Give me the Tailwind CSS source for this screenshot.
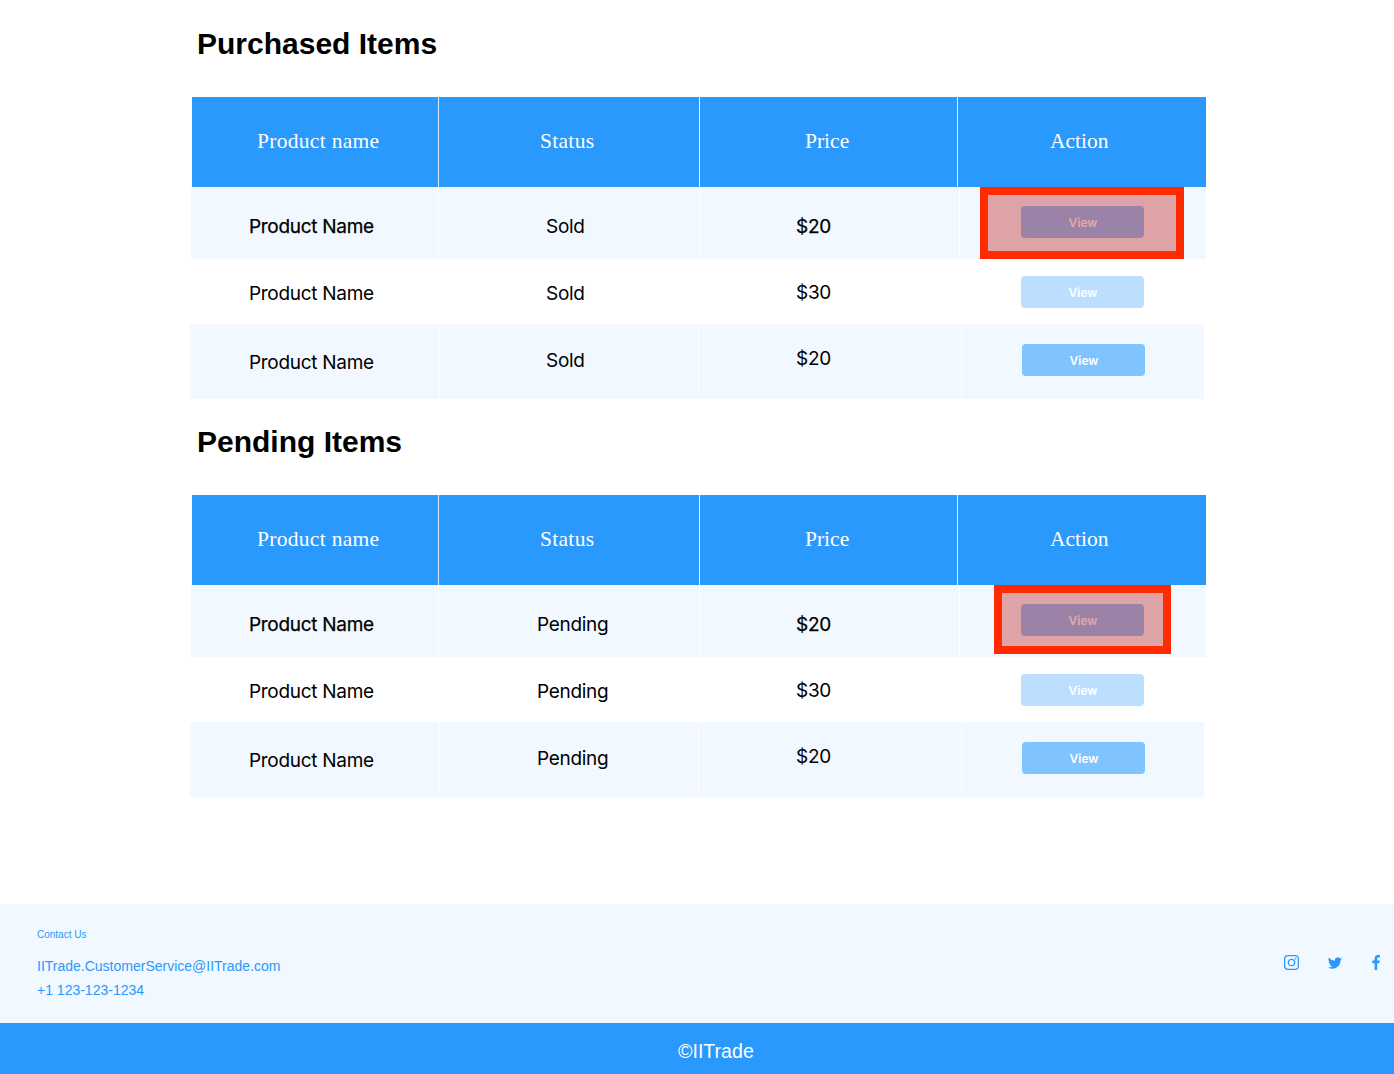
<!DOCTYPE html>
<html lang="en">
<head>
    <meta charset="UTF-8">
    <meta name="viewport" content="width=device-width, initial-scale=1.0">
    <title>Purchased Items</title>
    <script src="https://cdn.jsdelivr.net/npm/@tailwindcss/browser@4"></script>
</head>
<body class="bg-white h-[1074px] overflow-hidden flex flex-col font-['Inter',sans-serif] text-black">

<main class="h-[904px]">
    <h1 class="ml-[197px] pt-[25px] h-[97px] text-[30px] leading-[38px] font-bold font-['Liberation_Sans',sans-serif]">Purchased Items</h1>

    <div class="ml-[192px] w-[1014px] h-[90px] flex bg-[#2999fd] text-white text-[21.5px] tracking-[0.3px] font-['Liberation_Serif',serif]">
        <div class="w-[247px] border-r border-white/80 pl-[65px] pt-[28px]">Product name</div>
        <div class="w-[261px] border-r border-white/90 pl-[101px] pt-[28px]">Status</div>
        <div class="w-[258px] border-r border-white/80 pl-[105px] pt-[28px] tracking-normal">Price</div>
        <div class="flex-1 pl-[92px] pt-[28px] tracking-normal">Action</div>
    </div>
    <div class="ml-[191px] w-[1015px] h-[72px] flex bg-[#f1f8ff] text-[19px] tracking-[-0.3px] leading-[28px]">
        <div class="w-[248px] border-r border-white/70 pl-[58px] pt-[26px] [-webkit-text-stroke:0.25px_black]">Product Name</div>
        <div class="w-[261px] border-r border-white/70 pl-[107px] pt-[26px]">Sold</div>
        <div class="w-[260px] border-r border-white pl-[96px] pt-[26px] [-webkit-text-stroke:0.25px_black]">$20</div>
        <div class="relative flex-1 pl-[61px] pt-[19px]">
            <button class="block w-[123px] h-[32px] rounded-[4px] bg-[#7fc3ff] text-white text-[12px] tracking-normal pl-px pt-[2px] font-semibold">View</button>
            <div class="absolute left-[20px] top-0 w-[204px] h-[72px] border-[8px] border-[#ff2a00] bg-[#c42323]/40"></div>
        </div>
    </div>
    <div class="ml-[191px] w-[1015px] h-[65px] flex text-[19px] tracking-[-0.3px] leading-[28px]">
        <div class="w-[248px] pl-[58px] pt-[21px]">Product Name</div>
        <div class="w-[261px] pl-[107px] pt-[21px]">Sold</div>
        <div class="w-[260px] pl-[96px] pt-[20px]">$30</div>
        <div class="flex-1 pl-[61px] pt-[17px]">
            <button class="block w-[123px] h-[32px] rounded-[4px] bg-[#bcdfff] text-white text-[12px] tracking-normal pl-px pt-[2px] font-semibold">View</button>
        </div>
    </div>
    <div class="ml-[190px] w-[1014px] h-[75px] flex bg-[#f1f8ff] text-[19px] tracking-[-0.3px] leading-[28px]">
        <div class="w-[250px] border-r border-white/70 pl-[59px] pt-[25px]">Product Name</div>
        <div class="w-[259px] border-r border-white/70 pl-[106px] pt-[23px]">Sold</div>
        <div class="w-[263px] border-r border-white/70 pl-[97px] pt-[21px]">$20</div>
        <div class="flex-1 pl-[60px] pt-[20px]">
            <button class="block w-[123px] h-[32px] rounded-[4px] bg-[#7fc3ff] text-white text-[12px] tracking-normal pl-px pt-[2px] font-semibold">View</button>
        </div>
    </div>

    <h1 class="ml-[197px] pt-[24px] h-[96px] text-[30px] leading-[38px] font-bold font-['Liberation_Sans',sans-serif]">Pending Items</h1>

    <div class="ml-[192px] w-[1014px] h-[90px] flex bg-[#2999fd] text-white text-[21.5px] tracking-[0.3px] font-['Liberation_Serif',serif]">
        <div class="w-[247px] border-r border-white/80 pl-[65px] pt-[28px]">Product name</div>
        <div class="w-[261px] border-r border-white/90 pl-[101px] pt-[28px]">Status</div>
        <div class="w-[258px] border-r border-white/80 pl-[105px] pt-[28px] tracking-normal">Price</div>
        <div class="flex-1 pl-[92px] pt-[28px] tracking-normal">Action</div>
    </div>
    <div class="ml-[191px] w-[1015px] h-[72px] flex bg-[#f1f8ff] text-[19px] tracking-[-0.3px] leading-[28px]">
        <div class="w-[248px] border-r border-white/70 pl-[58px] pt-[26px] [-webkit-text-stroke:0.25px_black]">Product Name</div>
        <div class="w-[261px] border-r border-white/70 pl-[98px] pt-[26px]">Pending</div>
        <div class="w-[260px] border-r border-white pl-[96px] pt-[26px] [-webkit-text-stroke:0.25px_black]">$20</div>
        <div class="relative flex-1 pl-[61px] pt-[19px]">
            <button class="block w-[123px] h-[32px] rounded-[4px] bg-[#7fc3ff] text-white text-[12px] tracking-normal pl-px pt-[2px] font-semibold">View</button>
            <div class="absolute left-[34px] top-0 w-[177px] h-[69px] border-[8px] border-[#ff2a00] bg-[#c42323]/40"></div>
        </div>
    </div>
    <div class="ml-[191px] w-[1015px] h-[65px] flex text-[19px] tracking-[-0.3px] leading-[28px]">
        <div class="w-[248px] pl-[58px] pt-[21px]">Product Name</div>
        <div class="w-[261px] pl-[98px] pt-[21px]">Pending</div>
        <div class="w-[260px] pl-[96px] pt-[20px]">$30</div>
        <div class="flex-1 pl-[61px] pt-[17px]">
            <button class="block w-[123px] h-[32px] rounded-[4px] bg-[#bcdfff] text-white text-[12px] tracking-normal pl-px pt-[2px] font-semibold">View</button>
        </div>
    </div>
    <div class="ml-[190px] w-[1014px] h-[75px] flex bg-[#f1f8ff] text-[19px] tracking-[-0.3px] leading-[28px]">
        <div class="w-[250px] border-r border-white/70 pl-[59px] pt-[25px]">Product Name</div>
        <div class="w-[259px] border-r border-white/70 pl-[97px] pt-[23px]">Pending</div>
        <div class="w-[263px] border-r border-white/70 pl-[97px] pt-[21px]">$20</div>
        <div class="flex-1 pl-[60px] pt-[20px]">
            <button class="block w-[123px] h-[32px] rounded-[4px] bg-[#7fc3ff] text-white text-[12px] tracking-normal pl-px pt-[2px] font-semibold">View</button>
        </div>
    </div>
</main>

<footer class="h-[119px] bg-[#f1f8ff] flex justify-between text-[#2999fd] font-['Liberation_Sans',sans-serif]">
    <div class="pl-[37px] pt-[24px]">
        <p class="text-[10px] leading-[14px]">Contact Us</p>
        <p class="mt-[12px] text-[14px] leading-[24px]">IITrade.CustomerService@IITrade.com</p>
        <p class="text-[14px] leading-[24px]">+1 123-123-1234</p>
    </div>
    <div class="flex items-start pt-[51px] pr-[14px]">
        <svg class="w-[15px] h-[15px]" viewBox="0 0 14 14" fill="none" stroke="#2999fd">
            <rect x="0.6" y="0.6" width="12.8" height="12.8" rx="3.2" stroke-width="1.2"/>
            <circle cx="7" cy="7" r="3" stroke-width="1.2"/>
            <circle cx="10.7" cy="3.3" r="0.8" fill="#2999fd" stroke="none"/>
        </svg>
        <svg class="ml-[29px] w-[14px] h-[14px] mt-px" viewBox="0 0 24 24" fill="#2999fd">
            <path d="M23.95 4.57a10 10 0 0 1-2.82.77 4.96 4.96 0 0 0 2.16-2.72 9.9 9.9 0 0 1-3.12 1.18 4.92 4.92 0 0 0-8.38 4.48A13.98 13.98 0 0 1 1.64 3.16a4.92 4.92 0 0 0 1.52 6.57 4.9 4.9 0 0 1-2.23-.61v.06a4.92 4.92 0 0 0 3.95 4.83 4.9 4.9 0 0 1-2.22.08 4.93 4.93 0 0 0 4.6 3.42A9.87 9.87 0 0 1 0 19.54a13.94 13.94 0 0 0 7.55 2.21c9.05 0 14-7.5 14-13.98 0-.21 0-.42-.02-.63a9.94 9.94 0 0 0 2.46-2.55z"/>
        </svg>
        <svg class="ml-[30px] w-[8px] h-[15px]" viewBox="0 0 8 15" fill="#2999fd">
            <path d="M5.2 15V8.2h2.2l.4-2.7H5.2V3.9c0-.8.2-1.3 1.3-1.3H8V.2C7.700.1 6.900 0 6 0 4 0 2.600 1.200 2.600 3.500v2H.3v2.700h2.300V15z"/>
        </svg>
    </div>
</footer>

<div class="h-[51px] bg-[#2999fd] text-white text-[19.6px] leading-[56px] pl-[678px] font-['Liberation_Sans',sans-serif]">©IITrade</div>

</body>
</html>
